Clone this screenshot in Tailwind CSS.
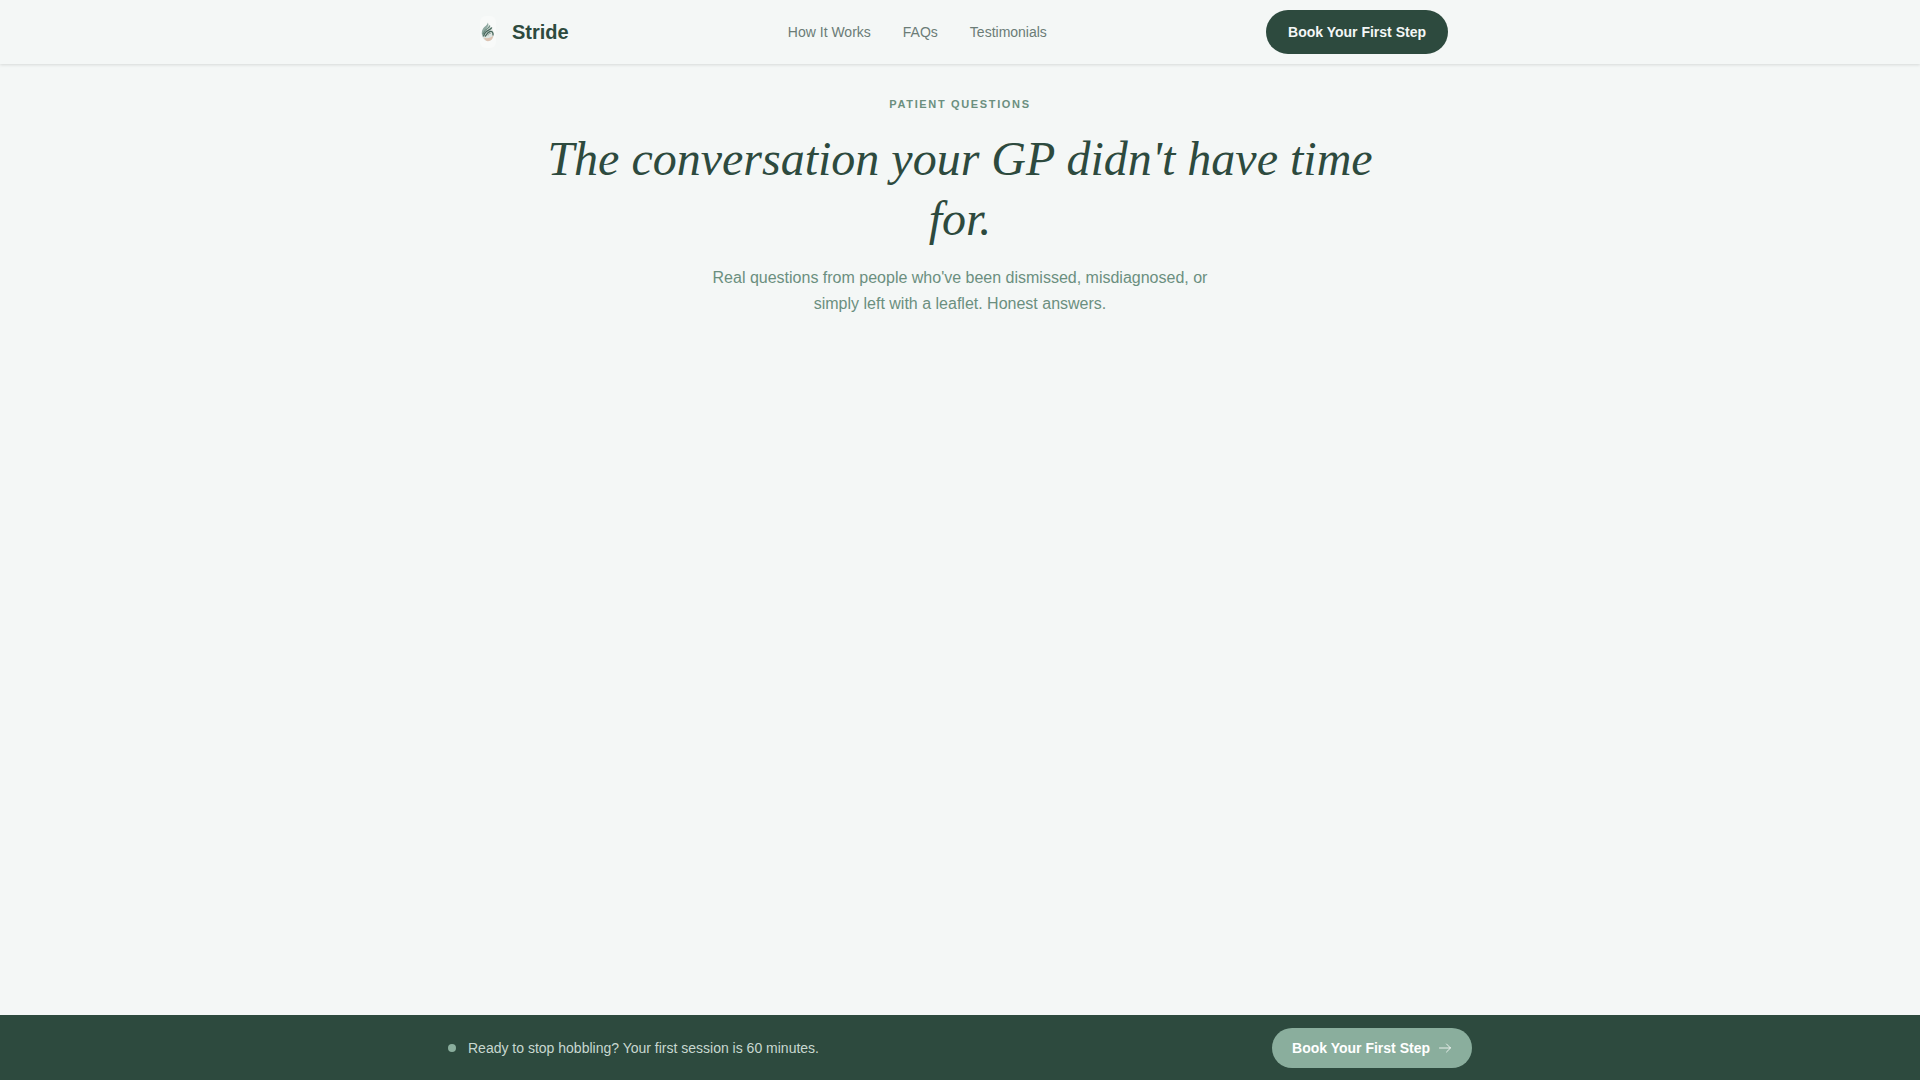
<!DOCTYPE html>
<html lang="en">
<head>
  <meta charset="UTF-8">
  <meta name="viewport" content="width=device-width, initial-scale=1.0">
  <title>Stride - Patient Questions</title>
  <script src="https://cdn.jsdelivr.net/npm/@tailwindcss/browser@4"></script>
</head>
<body class="bg-[#f4f7f6] font-['Liberation_Sans',Arial,sans-serif] min-h-screen flex flex-col">

  <!-- Navigation -->
  <header class="sticky top-0 bg-[#f4f7f6] shadow-[0_1px_3px_rgba(0,0,0,0.12)]">
    <div class="max-w-5xl mx-auto px-6 h-16 flex items-center justify-between">
      <a href="#" class="flex items-center gap-2">
        <svg class="size-8" viewBox="0 0 32 32" fill="none" aria-hidden="true">
          <rect x="8" y="0" width="16" height="32" rx="6" fill="#f8faf9"/>
          <!-- leaf body -->
          <path d="M16 6.5C16.5 9 20.8 11.5 21.7 16.5C22.5 21.5 19.5 25 16 25C11.5 25 9.2 20.5 10 16C10.6 12 14.8 10.5 16 6.5Z" fill="#dfe6e2"/>
          <path d="M10.8 21C8.6 16 10.5 12.5 13 10.5C14.8 9 15.7 8 15.8 6.5C17 9 15.8 11 14 12.7C11.8 14.8 10.3 17.5 10.8 21Z" fill="#8fa9a1"/>
          <!-- sweeping strands -->
          <path d="M10.8 18.5C12 15 13.5 13.5 15.5 12.5C17 11.6 17.6 10.8 17.7 9.5" stroke="#6b8b7f" stroke-width="1.2"/>
          <path d="M11.5 20.5C12.2 17.5 13.8 15.5 16.2 14.4C18 13.5 19.5 12.7 19.8 11.5" stroke="#49685d" stroke-width="1.3"/>
          <path d="M13 20.5C14.5 19.5 15 16.3 18 15.5C20 15 21.4 16.5 21 19.5" stroke="#49685d" stroke-width="1.3"/>
          <path d="M16 19.5C16.5 18 17.5 17.2 19 17.2" stroke="#8fa9a1"/>
          <!-- warm base -->
          <path d="M12 21.8C15.8 22.8 18.8 21.8 21.3 19.5C20.8 23 18.8 25.2 16 25.2C14.3 25.2 12.7 23.8 12 21.8Z" fill="#dcc2b1"/>
        </svg>
        <span class="text-xl font-bold text-[#2d4a3e]">Stride</span>
      </a>
      <nav class="flex items-center gap-8 text-sm text-[#6b7c76]">
        <a href="#how-it-works">How It Works</a>
        <a href="#faqs">FAQs</a>
        <a href="#testimonials">Testimonials</a>
      </nav>
      <button type="button" class="h-11 px-[22px] rounded-full bg-[#2d4a3e] text-sm font-semibold text-[#f4f7f6]">Book Your First Step</button>
    </div>
  </header>

  <!-- FAQ intro -->
  <main id="faqs" class="flex-1">
    <div class="max-w-4xl mx-auto px-6 pt-8 text-center">
      <p class="text-[11px] leading-[17px] font-bold uppercase tracking-[0.15em] text-[#6b8f7f]">Patient Questions</p>
      <h1 class="mt-4 font-['Liberation_Serif',serif] italic text-5xl leading-[60px] text-[#2d4a3e]">The conversation your GP didn't have time for.</h1>
      <p class="mt-4 mx-auto max-w-lg text-base leading-[26px] text-[#6b8f7f]">Real questions from people who've been dismissed, misdiagnosed, or simply left with a leaflet. Honest answers.</p>
    </div>
  </main>

  <!-- Booking bar -->
  <aside class="sticky bottom-0 bg-[#2d4a3e] border-t border-[#2d4a3e] py-3">
    <div class="max-w-5xl mx-auto flex items-center justify-between">
      <div class="flex items-center gap-3">
        <span class="size-2 rounded-full bg-[#8aae9d]"></span>
        <p class="text-sm text-[#c8d8d0]">Ready to stop hobbling? Your first session is 60 minutes.</p>
      </div>
      <button type="button" class="h-10 px-5 flex items-center gap-2 rounded-full bg-[#8aae9d] text-sm font-semibold text-white">
        Book Your First Step
        <svg class="size-3.5 text-white/80" viewBox="0 0 14 14" fill="none" stroke="currentColor" stroke-linecap="round" stroke-linejoin="round" aria-hidden="true">
          <path d="M1.5 7h11M8.5 3L12.5 7L8.5 11"/>
        </svg>
      </button>
    </div>
  </aside>

</body>
</html>
